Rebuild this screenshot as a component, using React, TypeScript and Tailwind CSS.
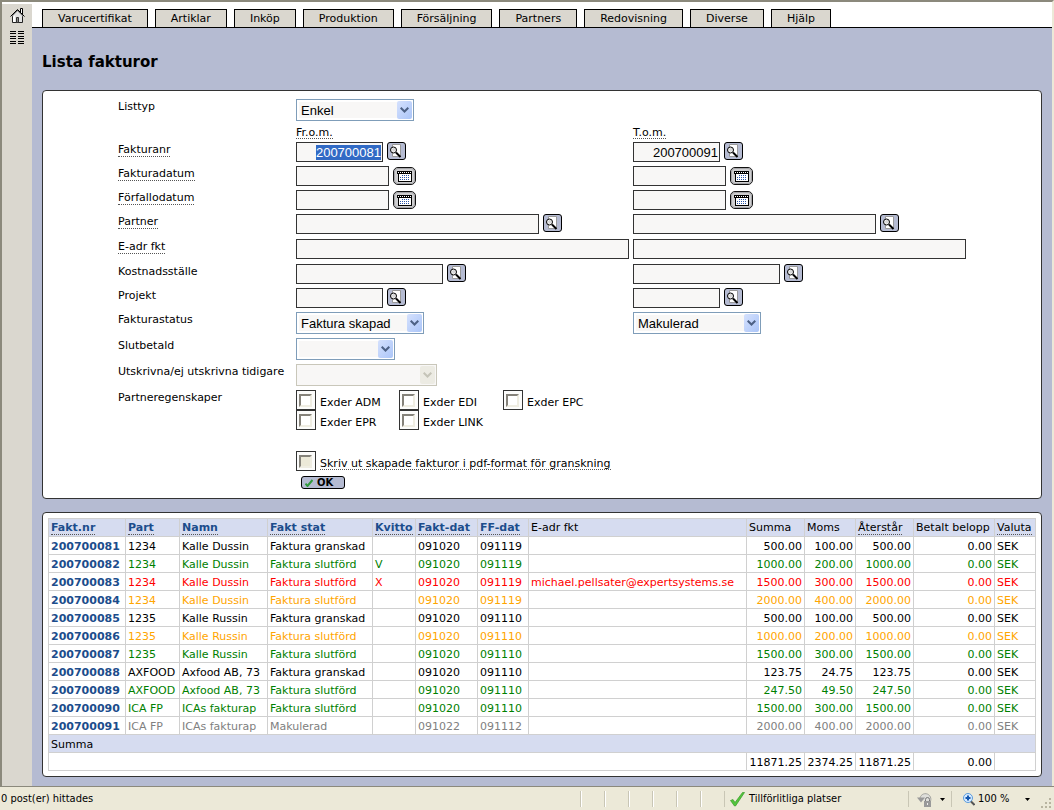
import { useEffect, useRef } from 'react';
import type { ReactNode } from 'react';

const tabs = ['Varucertifikat', 'Artiklar', 'Inköp', 'Produktion', 'Försäljning', 'Partners', 'Redovisning', 'Diverse', 'Hjälp'];

// nr, part, namn, status, kvitto, fakt-dat, ff-dat, e-adr, summa, moms, återstår, color
const invoices = [
  ['200700081', '1234', 'Kalle Dussin', 'Faktura granskad', '', '091020', '091119', '', '500.00', '100.00', '500.00', 'text-black'],
  ['200700082', '1234', 'Kalle Dussin', 'Faktura slutförd', 'V', '091020', '091119', '', '1000.00', '200.00', '1000.00', 'text-[#008000]'],
  ['200700083', '1234', 'Kalle Dussin', 'Faktura slutförd', 'X', '091020', '091119', 'michael.pellsater@expertsystems.se', '1500.00', '300.00', '1500.00', 'text-[#ff0000]'],
  ['200700084', '1234', 'Kalle Dussin', 'Faktura slutförd', '', '091020', '091119', '', '2000.00', '400.00', '2000.00', 'text-[#ffa500]'],
  ['200700085', '1235', 'Kalle Russin', 'Faktura granskad', '', '091020', '091110', '', '500.00', '100.00', '500.00', 'text-black'],
  ['200700086', '1235', 'Kalle Russin', 'Faktura slutförd', '', '091020', '091110', '', '1000.00', '200.00', '1000.00', 'text-[#ffa500]'],
  ['200700087', '1235', 'Kalle Russin', 'Faktura slutförd', '', '091020', '091110', '', '1500.00', '300.00', '1500.00', 'text-[#008000]'],
  ['200700088', 'AXFOOD', 'Axfood AB, 73', 'Faktura granskad', '', '091020', '091110', '', '123.75', '24.75', '123.75', 'text-black'],
  ['200700089', 'AXFOOD', 'Axfood AB, 73', 'Faktura slutförd', '', '091020', '091110', '', '247.50', '49.50', '247.50', 'text-[#008000]'],
  ['200700090', 'ICA FP', 'ICAs fakturap', 'Faktura slutförd', '', '091020', '091110', '', '1500.00', '300.00', '1500.00', 'text-[#008000]'],
  ['200700091', 'ICA FP', 'ICAs fakturap', 'Makulerad', '', '091022', '091112', '', '2000.00', '400.00', '2000.00', 'text-[#808080]'],
];

const sortable = ['Fakt.nr', 'Part', 'Namn', 'Fakt stat', 'Kvitto', 'Fakt-dat', 'FF-dat'];

const cell = 'border border-[#d0d0d0] px-[2px] pt-[2px] whitespace-nowrap';
const dotted = 'border-b border-dotted border-[#555]';

function SearchButton({ label }: { label: string }) {
  return (
    <button type="button" aria-label={label} className="block">
      <svg width="19" height="18" viewBox="0 0 19 18">
        <rect x="0.5" y="0.5" width="18" height="17" rx="2.5" fill="#b5bbd2" stroke="#000" />
        <path d="M5.500 2.500h8v12h-8z" fill="#fff" stroke="#999" />
        <circle cx="6.500" cy="8" r="3" fill="#f2f2f2" stroke="#000" />
        <path d="M5 8.500l2.500-2.500M6 9.500l2.500-2.500" stroke="#aaa" strokeWidth="0.700" />
        <path d="M9 10.500l4.500 4.500" stroke="#000" strokeWidth="2" />
      </svg>
    </button>
  );
}

function CalendarButton({ label }: { label: string }) {
  return (
    <button type="button" aria-label={label} className="mt-px block">
      <svg width="23" height="18" viewBox="0 0 23 18">
        <rect x="0.5" y="0.5" width="22" height="17" rx="4.5" fill="#cfcfd1" stroke="#111" />
        <rect x="1.5" y="1.5" width="20" height="15" rx="3.5" fill="none" stroke="#a5a5a8" />
        <g shapeRendering="crispEdges">
          <path d="M5 6h14v9H5z" fill="#000" />
          <path d="M6 7h12v7H6z" fill="#fff" />
          <path d="M4 4h15v3H4z" fill="#000" />
          <path d="M5 5h1v1H5zM7 5h1v1H7zM9 5h1v1H9zM11 5h1v1h-1zM13 5h1v1h-1zM15 5h1v1h-1zM17 5h1v1h-1z" fill="#fff" />
          <path d="M9 8h1v1H9zM11 8h1v1h-1zM13 8h1v1h-1zM15 8h1v1h-1zM7 10h1v1H7zM9 10h1v1H9zM11 10h1v1h-1zM13 10h1v1h-1zM15 10h1v1h-1zM7 12h1v1H7zM9 12h1v1H9zM11 12h1v1h-1zM13 12h1v1h-1zM15 12h1v1h-1z" fill="#2a55a8" />
        </g>
      </svg>
    </button>
  );
}

function TextField({ label, width, icon }: { label: string; width: string; icon?: 'search' | 'calendar' }) {
  return (
    <div className="flex items-start gap-1">
      <input type="text" aria-label={label} className={`h-5 ${width} border border-[#333] bg-[#f8f7f6] px-[2px] outline-none`} />
      {icon === 'search' && <SearchButton label={`Sök ${label}`} />}
      {icon === 'calendar' && <CalendarButton label={`Välj ${label}`} />}
    </div>
  );
}

function Select({ id, label, width, options, disabled }: { id?: string; label?: string; width: string; options: string[]; disabled?: boolean }) {
  return (
    <div className={`relative h-[22px] ${width}`}>
      <select
        id={id}
        aria-label={label}
        disabled={disabled}
        className={`h-full w-full appearance-none border pt-px pl-1 font-['Liberation_Sans',sans-serif] text-[13px] text-black outline-none ${disabled ? 'border-[#c9c7ba] bg-[#f8f7f6]' : 'border-[#7f9db9] bg-[#f8f7f6] shadow-[inset_0_0_0_2px_white]'}`}
      >
        {options.map((o) => (
          <option key={o}>{o}</option>
        ))}
      </select>
      <span className={`pointer-events-none absolute top-[2px] right-[2px] flex h-[18px] w-[15px] items-center justify-center rounded-[2px] ${disabled ? 'bg-[#ecebe3]' : 'bg-linear-to-br from-[#d5e1fd] to-[#abc5f8]'}`}>
        <svg width="9" height="6" viewBox="0 0 9 6">
          <path d="M0.700 0.700l3.800 3.800 3.800-3.800" fill="none" stroke={disabled ? '#c5c4b8' : '#4d6185'} strokeWidth="2" />
        </svg>
      </span>
    </div>
  );
}

function CheckField({ id, label, disabled, hint }: { id: string; label: string; disabled?: boolean; hint?: boolean }) {
  return (
    <div className="flex h-5 items-start gap-1">
      <span className="flex h-5 w-5 shrink-0 border border-[#333] bg-[#fcfcfb] pt-[3px] pl-[2px]">
        <input
          id={id}
          type="checkbox"
          disabled={disabled}
          className={`h-[13px] w-[13px] appearance-none border-2 border-t-[#85827a] border-r-[#efede2] border-b-[#efede2] border-l-[#85827a] ${disabled ? 'bg-[#ece9d8]' : 'bg-white'}`}
        />
      </span>
      <label htmlFor={id} className={`mt-[7px] leading-[11px] whitespace-nowrap ${hint ? dotted : ''}`}>
        {label}
      </label>
    </div>
  );
}

function Row({ label, hint, htmlFor, height, children }: { label: string; hint?: boolean; htmlFor?: string; height: string; children: ReactNode }) {
  return (
    <div className={`grid grid-cols-[178px_337px_1fr] items-start ${height}`}>
      <label htmlFor={htmlFor} className={`justify-self-start pt-[2px] leading-[12px] whitespace-nowrap ${hint ? dotted : ''}`}>
        {label}
      </label>
      {children}
    </div>
  );
}

function RangeRow({ label, hint, height, width, icon }: { label: string; hint?: boolean; height: string; width: string; icon?: 'search' | 'calendar' }) {
  return (
    <Row label={label} hint={hint} height={height}>
      <TextField label={`${label} fr.o.m.`} width={width} icon={icon} />
      <TextField label={`${label} t.o.m.`} width={width} icon={icon} />
    </Row>
  );
}

function FilterForm() {
  const first = useRef<HTMLInputElement>(null);

  // the first field is selected when the page opens
  useEffect(() => {
    first.current?.focus();
    first.current?.select();
  }, []);

  const numberField = "h-5 w-[87px] border border-[#333] bg-[#f8f7f6] px-[1px] text-right font-['Liberation_Sans',sans-serif] text-[13px] outline-none selection:bg-[#316ac5] selection:text-white";

  return (
    <form className="rounded-[4px] border border-[#333] bg-white pt-2 pb-[9px] pl-[75px]" onSubmit={(e) => e.preventDefault()}>
      <Row label="Listtyp" htmlFor="listtyp" height="h-[26px]">
        <Select id="listtyp" width="w-[118px]" options={['Enkel']} />
      </Row>
      <div className="grid h-[17px] grid-cols-[178px_337px_1fr] items-start">
        <span className={`col-start-2 justify-self-start pt-[2px] leading-[11px] ${dotted}`}>Fr.o.m.</span>
        <span className={`justify-self-start pt-[2px] leading-[11px] ${dotted}`}>T.o.m.</span>
      </div>
      <Row label="Fakturanr" hint htmlFor="fakturanr" height="h-6">
        <div className="flex items-start gap-1">
          <input ref={first} id="fakturanr" type="text" defaultValue="200700081" className={numberField} />
          <SearchButton label="Sök fakturanr fr.o.m." />
        </div>
        <div className="flex items-start gap-1">
          <input type="text" aria-label="Fakturanr t.o.m." defaultValue="200700091" className={numberField} />
          <SearchButton label="Sök fakturanr t.o.m." />
        </div>
      </Row>
      <RangeRow label="Fakturadatum" hint height="h-6" width="w-[93px]" icon="calendar" />
      <RangeRow label="Förfallodatum" hint height="h-6" width="w-[93px]" icon="calendar" />
      <RangeRow label="Partner" hint height="h-[25px]" width="w-[243px]" icon="search" />
      <RangeRow label="E-adr fkt" hint height="h-[25px]" width="w-[333px]" />
      <RangeRow label="Kostnadsställe" height="h-6" width="w-[147px]" icon="search" />
      <RangeRow label="Projekt" height="h-6" width="w-[87px]" icon="search" />
      <Row label="Fakturastatus" htmlFor="status" height="h-[26px]">
        <Select id="status" width="w-[128px]" options={['Faktura skapad']} />
        <Select label="Fakturastatus t.o.m." width="w-[128px]" options={['Makulerad']} />
      </Row>
      <Row label="Slutbetald" htmlFor="slutbetald" height="h-[26px]">
        <Select id="slutbetald" width="w-[99px]" options={['']} />
      </Row>
      <Row label="Utskrivna/ej utskrivna tidigare" htmlFor="utskrivna" height="h-[26px]">
        <Select id="utskrivna" width="w-[141px]" options={['']} disabled />
      </Row>
      <fieldset className="grid grid-cols-[178px_1fr] items-start">
        <legend className="float-left pt-[2px] leading-[12px]">Partneregenskaper</legend>
        <div className="col-start-2 grid grid-cols-[103px_104px_1fr]">
          <CheckField id="adm" label="Exder ADM" />
          <CheckField id="edi" label="Exder EDI" />
          <CheckField id="epc" label="Exder EPC" />
          <CheckField id="epr" label="Exder EPR" />
          <CheckField id="link" label="Exder LINK" />
        </div>
      </fieldset>
      <div className="mt-[21px] ml-[178px]">
        <CheckField id="pdf" label="Skriv ut skapade fakturor i pdf-format för granskning" disabled hint />
        <button type="submit" className="mt-[5px] ml-[5px] flex h-[13px] w-11 items-center gap-1 rounded-[3px] border border-black bg-[#b5bbd2] pl-[3px] text-[10px] leading-none font-bold">
          <svg width="8" height="8" viewBox="0 0 8 8">
            <path d="M0.500 4.500l2 2.500L7.500 1" fill="none" stroke="#2f9a3c" strokeWidth="2" />
          </svg>
          OK
        </button>
      </div>
    </form>
  );
}

function InvoiceTable() {
  return (
    <div className="mt-[13px] rounded-[4px] border border-[#333] bg-white p-[5px]">
      <table className="w-full table-fixed border-collapse leading-[15px]">
        <colgroup>
          <col className="w-[77px]" />
          <col className="w-[54px]" />
          <col className="w-[88px]" />
          <col className="w-[105px]" />
          <col className="w-[43px]" />
          <col className="w-[62px]" />
          <col className="w-[51px]" />
          <col />
          <col className="w-[58px]" />
          <col className="w-[51px]" />
          <col className="w-[58px]" />
          <col className="w-[81px]" />
          <col className="w-[41px]" />
        </colgroup>
        <thead>
          <tr className="h-[18px] bg-[#d6dcf0] text-left align-top">
            {sortable.map((name) => (
              <th key={name} className={cell}>
                <a href="#" className={`block w-fit leading-[13px] text-[#1c4d8c] ${dotted}`}>{name}</a>
              </th>
            ))}
            <th className={`${cell} leading-[13px] font-normal`}>E-adr fkt</th>
            <th className={`${cell} leading-[13px] font-normal`}>Summa</th>
            <th className={`${cell} leading-[13px] font-normal`}>Moms</th>
            <th className={`${cell} font-normal`}><span className={`block w-fit leading-[13px] ${dotted}`}>Återstår</span></th>
            <th className={`${cell} leading-[13px] font-normal`}>Betalt belopp</th>
            <th className={`${cell} font-normal`}><span className={`block w-fit leading-[13px] ${dotted}`}>Valuta</span></th>
          </tr>
        </thead>
        <tbody>
          {invoices.map(([nr, part, name, status, receipt, date, due, email, sum, vat, rest, color]) => (
            <tr key={nr} className={`h-[18px] ${color}`}>
              <td className={cell}><a href="#" className="font-bold text-[#1c4d8c]">{nr}</a></td>
              <td className={cell}>{part}</td>
              <td className={cell}>{name}</td>
              <td className={cell}>{status}</td>
              <td className={cell}>{receipt}</td>
              <td className={cell}>{date}</td>
              <td className={cell}>{due}</td>
              <td className={cell}>{email}</td>
              <td className={`${cell} text-right`}>{sum}</td>
              <td className={`${cell} text-right`}>{vat}</td>
              <td className={`${cell} text-right`}>{rest}</td>
              <td className={`${cell} text-right`}>0.00</td>
              <td className={cell}>SEK</td>
            </tr>
          ))}
        </tbody>
        <tfoot>
          <tr className="h-[18px] bg-[#d6dcf0]">
            <td colSpan={13} className={cell}>Summa</td>
          </tr>
          <tr className="h-[18px]">
            <td colSpan={8} className={cell}></td>
            <td className={`${cell} text-right`}>11871.25</td>
            <td className={`${cell} text-right`}>2374.25</td>
            <td className={`${cell} text-right`}>11871.25</td>
            <td className={`${cell} text-right`}>0.00</td>
            <td className={cell}></td>
          </tr>
        </tfoot>
      </table>
    </div>
  );
}

function Sidebar() {
  return (
    <aside className="mt-[2px] flex w-[30px] shrink-0 flex-col items-center gap-2 bg-[#dad7cf] pt-1">
      <a href="#" aria-label="Hem">
        <svg width="15" height="15" viewBox="0 0 15 15">
          <path d="M10.500 0.500h2v6h-2z" fill="#fff" stroke="#000" />
          <path d="M2.500 7.500v7h10v-7L7.500 2.500z" fill="#e4e4e4" stroke="#222" />
          <path d="M3 9v5h2V7z" fill="#fff" />
          <path d="M0.500 8.500L7.500 1.500l7 7" fill="none" stroke="#000" />
          <path d="M2 8.500L7.500 3l5.500 5.500" fill="none" stroke="#bbb" />
          <path d="M6.500 9.500h2v5h-2z" fill="#888" stroke="#333" />
        </svg>
      </a>
      <a href="#" aria-label="Meny">
        <svg width="14" height="14" viewBox="0 0 14 14" shapeRendering="crispEdges">
          <path d="M0 0.500h6M8 0.500h6M0 2.500h6M8 2.500h6M0 5.500h6M8 5.500h6M0 7.500h6M8 7.500h6M0 10.500h6M8 10.500h6M0 12.500h6M8 12.500h6" stroke="#000" />
        </svg>
      </a>
    </aside>
  );
}

function StatusBar() {
  return (
    <footer className="flex h-6 items-stretch border-t border-[#8b897c] bg-[#ece9d8] pt-px font-['DejaVu_Sans_Condensed','DejaVu_Sans',sans-serif] leading-[22px]">
      <span className="grow pl-[1px]">0 post(er) hittades</span>
      {[0, 1, 2, 3, 4, 5].map((i) => (
        <span key={i} className="my-[3px] w-6 border-l border-[#c9c6b5] shadow-[inset_1px_0_0_white]" />
      ))}
      <span className="my-[3px] flex w-[184px] items-center gap-1 border-l border-[#c9c6b5] pl-[5px]">
        <svg width="15" height="15" viewBox="0 0 15 15">
          <path d="M0.500 8.500L3 7.500l2 3L12.500 0.500h2L5.500 14h-1z" fill="#52c63c" stroke="#3a9a2a" strokeWidth="0.700" />
        </svg>
        Tillförlitliga platser
      </span>
      <button type="button" aria-label="Säkerhet" className="my-[3px] flex w-[43px] items-center gap-[7px] border-l border-[#c9c6b5] pl-2">
        <svg width="16" height="15" viewBox="0 0 16 15">
          <path d="M3 6a5.500 5.500 0 1 1 8 6" fill="#dededa" stroke="#a5a5a0" />
          <path d="M0 5.500h8L4 10.500z" fill="#999" />
          <path d="M8.500 9V7.500a2 2 0 0 1 4 0V9" fill="none" stroke="#777" />
          <path d="M7 9h7v6H7z" fill="#999" />
          <path d="M10 11h1v2h-1z" fill="#eee" />
        </svg>
        <svg width="5" height="3" viewBox="0 0 5 3"><path d="M0 0h5L2.500 3z" fill="#000" /></svg>
      </button>
      <button type="button" className="my-[3px] flex w-[87px] items-center border-l border-[#c9c6b5] pl-[11px]">
        <svg width="12" height="13" viewBox="0 0 12 13" className="mr-[3px]">
          <circle cx="5" cy="5" r="4.500" fill="#d7ebff" stroke="#5a9bdc" />
          <path d="M2.500 5h5M5 2.500v5" stroke="#1458b0" strokeWidth="2" />
          <path d="M8 8.500l3.500 3.500" stroke="#555" strokeWidth="2" />
        </svg>
        100 %
        <svg width="5" height="3" viewBox="0 0 5 3" className="ml-4"><path d="M0 0h5L2.500 3z" fill="#000" /></svg>
      </button>
      <svg width="12" height="12" viewBox="0 0 12 12" className="mr-px ml-[3px] self-end" shapeRendering="crispEdges">
        <path d="M8 0h2v2H8zM4 4h2v2H4zM8 4h2v2H8zM0 8h2v2H0zM4 8h2v2H4zM8 8h2v2H8z" fill="#b8b4a0" />
      </svg>
    </footer>
  );
}

export default function App() {
  return (
    <div className="flex min-h-screen flex-col bg-white font-['DejaVu_Sans',sans-serif] text-[11px] text-black">
      <div className="flex grow border-t-2 border-r-2 border-l-2 border-t-[#8b897c] border-r-[#ece9d8] border-l-[#8b897c]">
        <Sidebar />
        <div className="flex min-w-0 grow flex-col">
          <nav className="flex items-end gap-[7px] border-b border-black pt-[7px] pl-[10px]">
            {tabs.map((name) => (
              <a key={name} href="#" className="block h-[18px] border border-b-0 border-black bg-[#dad7cf] px-[15px] leading-[18px]">
                {name}
              </a>
            ))}
          </nav>
          <main className="grow bg-[#b5bbd2] pr-[10px] pb-[9px] pl-[10px]">
            <h1 className="pt-6 pb-[18px] text-[15px] leading-5 font-bold">Lista fakturor</h1>
            <FilterForm />
            <InvoiceTable />
          </main>
        </div>
      </div>
      <StatusBar />
    </div>
  );
}
